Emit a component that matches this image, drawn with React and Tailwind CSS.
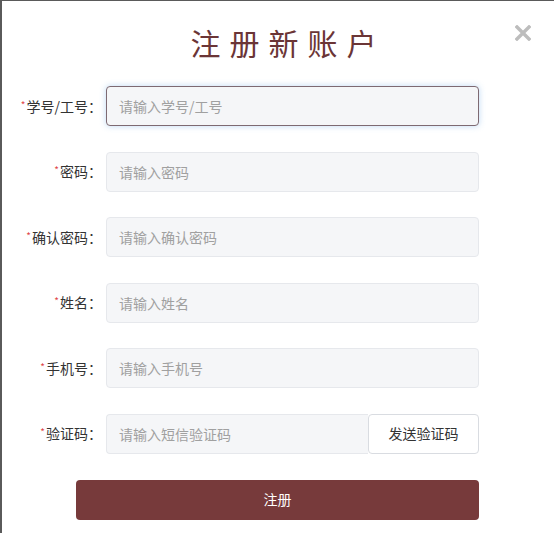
const fields = [
  { label: "学号/工号", placeholder: "请输入学号/工号", focused: true },
  { label: "密码", placeholder: "请输入密码" },
  { label: "确认密码", placeholder: "请输入确认密码" },
  { label: "姓名", placeholder: "请输入姓名" },
  { label: "手机号", placeholder: "请输入手机号" },
];

function Label({ text }) {
  return (
    <label className="w-[100px] shrink-0 text-right text-[14px] text-[#333]">
      <span className="relative top-[-3px] mr-[1px] text-[10px] text-[#e0454a]">*</span>
      {text}：
    </label>
  );
}

export default function App() {
  return (
    <div
      className="relative h-[533px] w-[554px] overflow-hidden border-l-2 border-t border-[#5a5a5a] bg-white"
      style={{ fontFamily: '"Noto Sans CJK SC", "Noto Sans", sans-serif' }}
    >
      {/* close */}
      <button className="absolute right-[23px] top-[24px] h-[16px] w-[16px]">
        <svg viewBox="0 0 16 16" className="h-full w-full">
          <path d="M2 2L14 14M14 2L2 14" stroke="#bdbdbd" strokeWidth="3.4" strokeLinecap="square" />
        </svg>
      </button>

      <h2 className="pl-[20px] pt-[19px] text-center text-[30px] font-normal leading-[44px] tracking-[9px] text-[#6b3536]">
        注册新账户
      </h2>

      <form className="mt-[22px] flex flex-col gap-[25.6px]">
        {fields.map((f) => (
          <div key={f.label} className="flex items-center">
            <Label text={f.label} />
            <input
              placeholder={f.placeholder}
              className={
                "ml-[4px] h-[40px] w-[373px] rounded-[4px] border bg-[#f5f6f8] px-[12px] text-[14px] outline-none placeholder:text-[#a0a0a0] " +
                (f.focused
                  ? "border-[#7e6a72] shadow-[0_0_6px_rgba(110,170,230,0.45)]"
                  : "border-[#e6e8ec]")
              }
            />
          </div>
        ))}

        <div className="flex items-center">
          <Label text="验证码" />
          <div className="ml-[4px] flex h-[40px] w-[373px]">
            <input
              placeholder="请输入短信验证码"
              className="h-full flex-1 rounded-l-[4px] border border-r-0 border-[#e6e8ec] bg-[#f5f6f8] px-[12px] text-[14px] outline-none placeholder:text-[#a0a0a0]"
            />
            <button
              type="button"
              className="h-full w-[111px] rounded-[4px] border border-[#d9dce1] bg-white text-[14px] text-[#333]"
            >
              发送验证码
            </button>
          </div>
        </div>

        <button
          type="button"
          className="ml-[74px] h-[40px] w-[403px] rounded-[4px] bg-[#773a3b] text-[14px] text-white"
        >
          注册
        </button>
      </form>
    </div>
  );
}
